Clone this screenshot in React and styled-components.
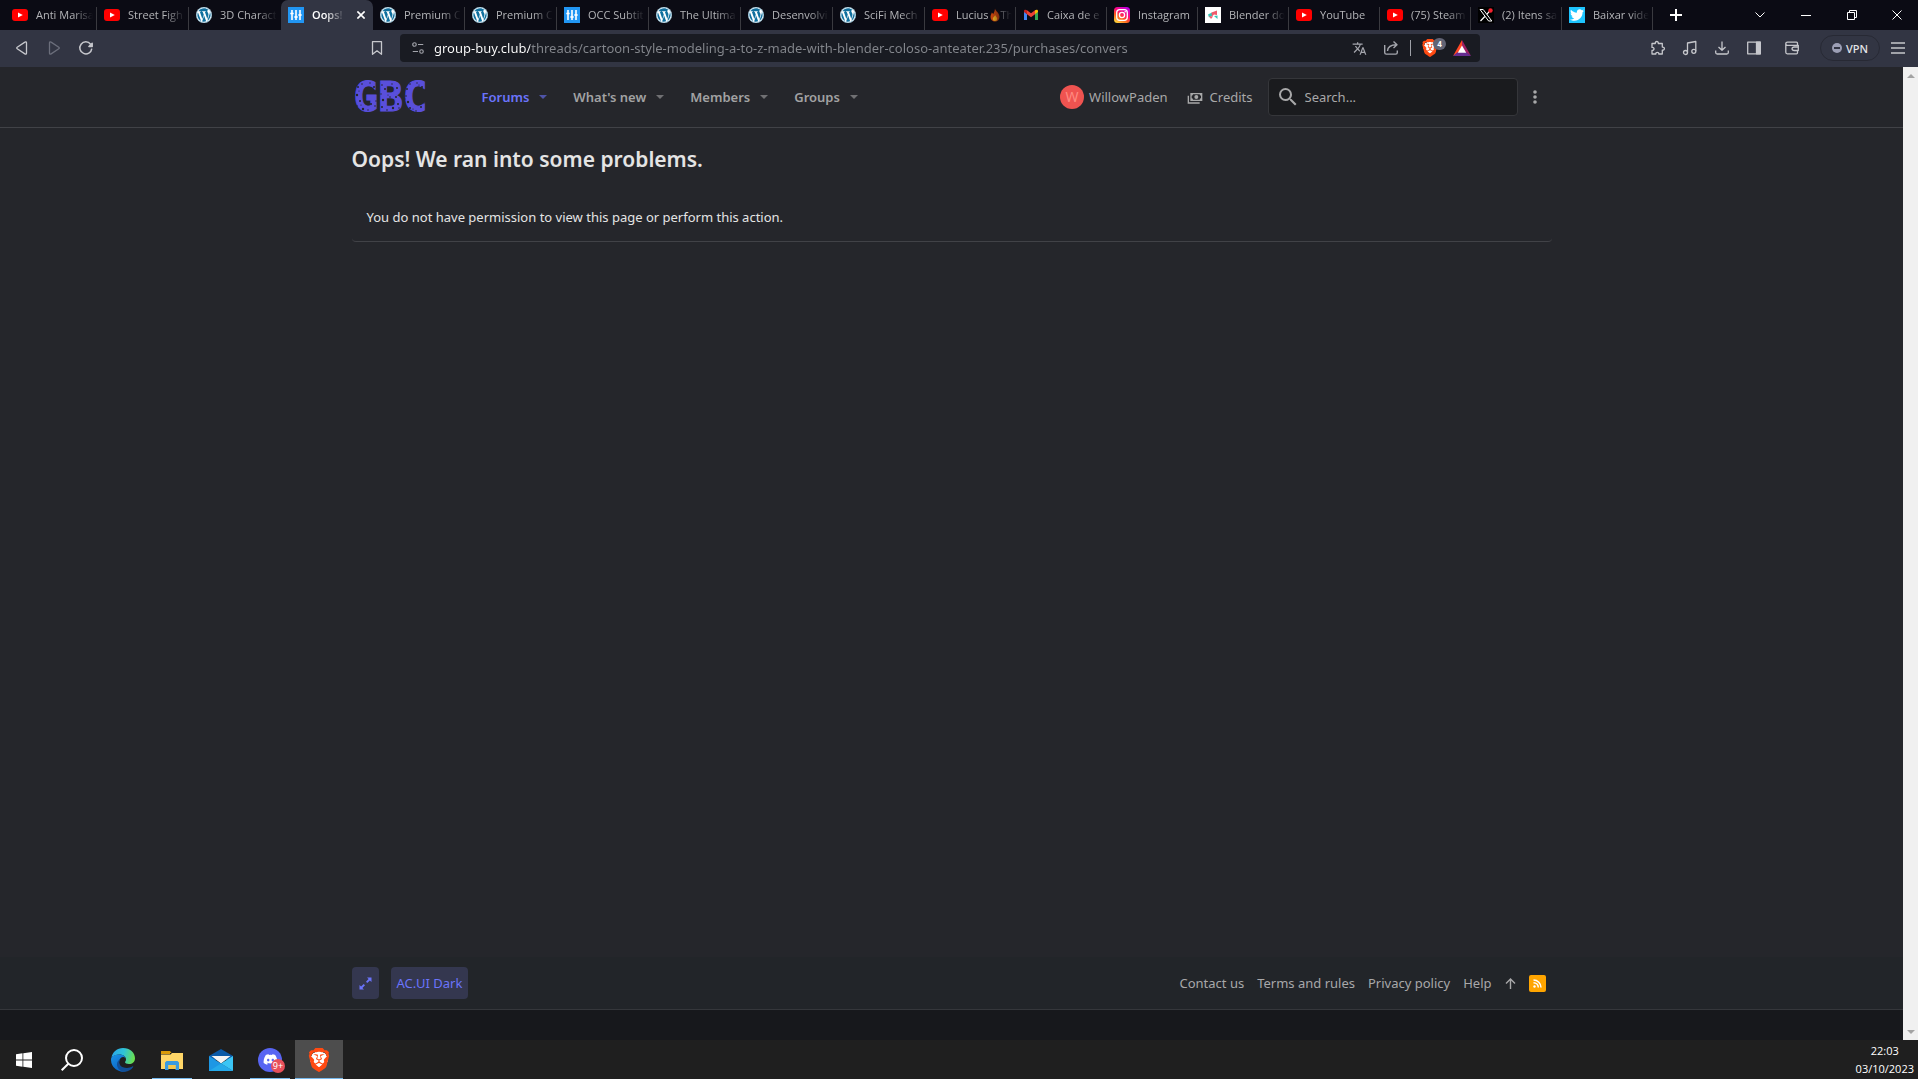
import React from 'react';
import styled, { createGlobalStyle, css } from 'styled-components';
import { FaWordpress, FaDiscord, FaTwitter } from 'react-icons/fa';
import { MdTranslate } from 'react-icons/md';
import { SiBrave } from 'react-icons/si';

const GlobalStyle = createGlobalStyle`
  * {
    box-sizing: border-box;
  }

  body {
    margin: 0;
    background: #25262b;
    font-family: 'Noto Sans', 'Open Sans', sans-serif;
    font-size: 13px;
    color: #a8a8a9;
  }

  button,
  input {
    font: inherit;
    color: inherit;
    background: none;
    border: none;
    padding: 0;
    outline: none;
  }

  a {
    color: inherit;
    text-decoration: none;
  }

  svg {
    display: block;
    flex-shrink: 0;
  }
`;

const Screen = styled.div`
  display: flex;
  flex-direction: column;
  min-height: 100vh;
`;

/* ---------- browser chrome ---------- */

const TabStrip = styled.div`
  display: flex;
  height: 30px;
  padding-left: 5px;
  background: #0b0b14;
`;

const Tab = styled.div`
  display: flex;
  align-items: center;
  flex: 0 1 ${props => (props.$narrow ? 91 : 92)}px;
  min-width: 0;
  height: 30px;
  color: #b4b5b8;
  background: linear-gradient(#3a3a40, #3a3a40) right bottom / 1px 23px no-repeat;

  ${props =>
    props.$plain &&
    css`
      background: none;
    `}

  ${props =>
    props.$active &&
    css`
      color: #fff;
      font-weight: 600;
      background: #323543;
      border-radius: 7px 7px 0 0;
    `}
`;

const TabButton = styled.button`
  display: flex;
  align-items: center;
  gap: 8px;
  flex: 1;
  min-width: 0;
  padding-left: 7px;
`;

const TabTitle = styled.span`
  display: flex;
  align-items: center;
  flex: 1;
  min-width: 0;
  margin-right: 4px;
  overflow: hidden;
  white-space: nowrap;
  font-family: 'Open Sans', 'Noto Sans', sans-serif;
  font-size: 11px;
  line-height: 16px;
  mask-image: linear-gradient(to left, transparent, #000 ${props => (props.$full ? 0 : 20)}px);
`;

const TabClose = styled.button`
  display: flex;
  justify-content: center;
  width: 24px;
`;

const StripButton = styled.button`
  display: flex;
  align-items: center;
  justify-content: center;
  width: ${props => props.$width || 46}px;
  height: 30px;
  color: #fff;
`;

const WindowControls = styled.div`
  display: flex;
  margin-left: auto;
`;

const Toolbar = styled.div`
  display: flex;
  align-items: center;
  height: 37px;
  padding-bottom: 1px;
  color: #c6c7cc;
  background: #323543;
`;

const ToolbarStart = styled.div`
  display: flex;
  align-items: center;
  flex: 1;
  padding: 0 7px 0 6px;
`;

const ToolbarEnd = styled.div`
  display: flex;
  align-items: center;
  justify-content: flex-end;
  flex: 1;
  padding: 0 4px 0 9px;
`;

const IconButton = styled.button`
  display: flex;
  align-items: center;
  justify-content: center;
  position: relative;
  width: 32px;
  height: 28px;
  color: ${props => (props.$dim ? '#6b6e7b' : 'inherit')};
  margin-left: ${props => (props.$push ? 'auto' : '0')};
`;

const AddressBar = styled.div`
  display: flex;
  align-items: center;
  flex: 0 1 1080px;
  height: 28px;
  margin-right: 38px;
  padding: 0 2px;
  color: #a4a6ad;
  background: #191b22;
  border-radius: 4px;
`;

const AddressInput = styled.input`
  flex: 1;
  min-width: 0;
  line-height: 20px;
  color: transparent;
  background: linear-gradient(to right, #fff 96px, #83868c 96px);
  background-clip: text;
`;

const BarDivider = styled.span`
  width: 1px;
  height: 16px;
  margin: 0 3px;
  background: #9fa1a8;
`;

const ShieldBadge = styled.span`
  position: absolute;
  top: 4px;
  right: 0;
  width: 13px;
  height: 12px;
  border-radius: 6px;
  font-size: 8px;
  font-weight: 700;
  line-height: 12px;
  text-align: center;
  color: #fff;
  background: #626475;
`;

const WalletButton = styled(IconButton)`
  margin: 0 12px 0 6px;
`;

const VpnButton = styled.button`
  display: flex;
  align-items: center;
  justify-content: center;
  gap: 4px;
  width: 60px;
  height: 26px;
  margin-right: 2px;
  border: 1px solid #272934;
  border-radius: 13px;
  font-size: 11px;
  font-weight: 500;
  color: #e4e4e8;
`;

/* ---------- forum page ---------- */

const Viewport = styled.div`
  display: flex;
  flex: 1;
`;

const Page = styled.div`
  display: flex;
  flex-direction: column;
  flex: 1;
  min-width: 0;
  background: #25262b;
`;

const Scrollbar = styled.div`
  display: flex;
  flex-direction: column;
  justify-content: space-between;
  width: 15px;
  background: #f0f0f0;
`;

const ScrollButton = styled.button`
  display: flex;
  align-items: center;
  justify-content: center;
  height: 17px;
  color: #a3a3a3;
`;

const Container = styled.div`
  width: 100%;
  max-width: 1200px;
  margin: 0 auto;
`;

const Header = styled.header`
  border-bottom: 1px solid #414247;
`;

const HeaderRow = styled(Container)`
  display: flex;
  align-items: center;
  height: 60px;
`;

const Logo = styled.a`
  position: relative;
  width: 76px;
  padding-left: 2px;
  font-family: 'DejaVu Sans Mono', monospace;
  font-size: 41px;
  font-weight: 700;
  line-height: 44px;
  color: #594fdb;
  -webkit-text-stroke: 1px #594fdb;
`;

const LogoWear = styled.svg`
  position: absolute;
  inset: 0;
  width: 100%;
  height: 100%;
`;

const Nav = styled.nav`
  display: flex;
  align-items: center;
  gap: 26px;
  margin-left: 54px;
`;

const NavItem = styled.a`
  display: flex;
  align-items: center;
  gap: 10px;
  font-weight: 600;
  color: ${props => (props.$active ? '#6b74fb' : '#a2a2a3')};

  svg {
    opacity: 0.6;
  }
`;

const UserArea = styled.div`
  display: flex;
  align-items: center;
  margin-left: auto;
`;

const UserLink = styled.a`
  display: flex;
  align-items: center;
  gap: ${props => props.$gap}px;
  margin-right: ${props => props.$after}px;
`;

const Avatar = styled.span`
  width: 24px;
  height: 24px;
  border-radius: 50%;
  font-size: 14px;
  line-height: 24px;
  text-align: center;
  color: #ff8a80;
  background: #ef5350;
`;

const SearchBox = styled.label`
  display: flex;
  align-items: center;
  gap: 5px;
  width: 250px;
  height: 38px;
  padding-left: 7px;
  border: 1px solid #35363a;
  border-radius: 4px;
  background: #1a1b1e;
`;

const SearchInput = styled.input`
  flex: 1;
  min-width: 0;

  &::placeholder {
    color: #a8a8a9;
    opacity: 1;
  }
`;

const MoreButton = styled.button`
  display: flex;
  justify-content: center;
  width: 34px;
`;

const Main = styled.main`
  flex: 1;
`;

const Title = styled.h1`
  margin: 0;
  padding: 16px 0 25px;
  font-size: 21px;
  font-weight: 600;
  line-height: 30px;
  color: #e4e4e4;
`;

const Message = styled.div`
  padding: 7px 15px 13px;
  border-bottom: 1px solid #414247;
  border-radius: 4px;
  line-height: 22px;
  color: #e4e4e4;
`;

const Footer = styled.footer`
  background: #222529;
  border-bottom: 1px solid #35373b;
`;

const FooterRow = styled(Container)`
  display: flex;
  align-items: center;
  gap: 12px;
  padding: 10px 6px 10px 0;
`;

const StyleButton = styled.button`
  display: flex;
  align-items: center;
  height: 32px;
  padding: 0 ${props => (props.$icon ? 7 : 6)}px;
  border-radius: 4px;
  color: #6b74fb;
  background: #34374f;
`;

const FooterLinks = styled.div`
  display: flex;
  align-items: center;
  gap: 13px;
  margin-left: auto;
`;

const RssLink = styled.a`
  display: flex;
  align-items: center;
  justify-content: center;
  width: 17px;
  height: 17px;
  border-radius: 2px;
  background: #ffa500;
`;

const BottomBar = styled.div`
  height: 30px;
  background: #17181c;
`;

/* ---------- task bar ---------- */

const TaskBar = styled.div`
  display: flex;
  gap: 1px;
  height: 39px;
  padding-left: 1px;
  background: #1f1f1f;
`;

const TaskButton = styled.button`
  position: relative;
  display: flex;
  align-items: center;
  justify-content: center;
  width: 48px;
  background: ${props => (props.$active ? '#4d4d4d' : 'none')};

  &::after {
    content: '';
    display: ${props => (props.$open || props.$active ? 'block' : 'none')};
    position: absolute;
    bottom: 0;
    left: ${props => (props.$active ? 0 : 4)}px;
    right: ${props => (props.$active ? 0 : 4)}px;
    height: 1px;
    background: #76b9ed;
  }
`;

const TaskBadge = styled.span`
  position: absolute;
  right: 9px;
  bottom: 6px;
  width: 14px;
  height: 14px;
  border-radius: 50%;
  font-size: 9px;
  line-height: 13px;
  text-align: center;
  color: #fff;
  background: #e8505b;
`;

const Clock = styled.div`
  margin-left: auto;
  padding: 2px 4px 0 0;
  font-family: 'Open Sans', 'Noto Sans', sans-serif;
  font-size: 11px;
  line-height: 18px;
  text-align: center;
  color: #fff;
`;

/* ---------- icons ---------- */

const YoutubeIcon = () => (
  <svg width="16" height="16" viewBox="0 0 16 16">
    <rect y="2" width="16" height="12" rx="3" fill="#f00" />
    <path d="M6 5.500v5L10.800 8z" fill="#fff" />
  </svg>
);

const WordpressBadge = styled.span`
  flex-shrink: 0;
  border-radius: 50%;
  color: #0f6f9e;
  background: #fff;
`;

const WordpressIcon = () => (
  <WordpressBadge>
    <FaWordpress size={16} />
  </WordpressBadge>
);

const SlidersIcon = () => (
  <svg width="16" height="16" viewBox="0 0 16 16">
    <rect width="16" height="16" fill="#2196f3" />
    <path
      d="M4 3v10M8 3v10M12 3v10M2.300 6.500h3.400M6.300 10h3.400M10.300 8h3.400"
      stroke="#fff"
      strokeWidth="1.6"
    />
  </svg>
);

const GmailIcon = () => (
  <svg width="16" height="16" viewBox="0 0 16 16">
    <path d="M1 4.500v8.500h3V7z" fill="#4285f4" />
    <path d="M12 7v6h3V4.500z" fill="#34a853" />
    <path d="M1 4.200C1 2.500 2.800 2.400 4 3.300V7.300L1 5z" fill="#c5221f" />
    <path d="M4 3.300l4 3 4-3v4L8 10.300l-4-3z" fill="#ea4335" />
    <path d="M12 3.300c1.200-.9 3-.8 3 .9V5l-3 2.300z" fill="#fbbc04" />
  </svg>
);

const InstagramIcon = () => (
  <svg width="16" height="16" viewBox="0 0 16 16">
    <defs>
      <linearGradient id="insta" x1="0.2" y1="1" x2="0.8" y2="0">
        <stop offset="0" stopColor="#ffd43a" />
        <stop offset="0.35" stopColor="#ff5a1f" />
        <stop offset="0.6" stopColor="#ff0a78" />
        <stop offset="1" stopColor="#b900e6" />
      </linearGradient>
    </defs>
    <rect width="16" height="16" rx="3.500" fill="url(#insta)" />
    <g fill="none" stroke="#fff" strokeWidth="1.3">
      <rect x="2.700" y="2.700" width="10.600" height="10.600" rx="3" />
      <circle cx="8" cy="8" r="2.600" />
    </g>
    <circle cx="11.200" cy="4.800" r="0.8" fill="#fff" />
  </svg>
);

const DownloaderIcon = () => (
  <svg width="16" height="16" viewBox="0 0 16 16">
    <rect width="16" height="16" fill="#fff" />
    <path d="M3 7.500l4-2v3.500L4 10.500zM9 9l3.500 3V8.500z" fill="#35c4b5" />
    <path d="M6.500 5.500L12 3.500V8L9 7.500 7 9.500zM4 9l4 .5-2 2.500z" fill="#f0596b" />
  </svg>
);

const XIcon = () => (
  <svg width="16" height="16" viewBox="0 0 16 16">
    <rect width="16" height="16" fill="#000" />
    <path d="M2 2.500h3.200L13.800 14h-3.200z" fill="none" stroke="#fff" strokeWidth="1" />
    <path d="M13 2.500L8.800 7.400M6.800 9.500L2.500 14" stroke="#fff" strokeWidth="1.2" />
    <circle cx="12.500" cy="3.500" r="2.200" fill="#f4212e" />
  </svg>
);

const BirdBadge = styled.span`
  display: flex;
  align-items: center;
  justify-content: center;
  flex-shrink: 0;
  width: 16px;
  height: 16px;
  color: #fff;
  background: #1dc4ff;
`;

const BirdIcon = () => (
  <BirdBadge>
    <FaTwitter size={14} />
  </BirdBadge>
);

const FlameIcon = () => (
  <svg width="12" height="14" viewBox="0 0 12 14">
    <path
      d="M6 0.500c.3 2.500 4.500 4.300 4.500 8.300A4.400 4.400 0 0 1 6 13.500 4.400 4.400 0 0 1 1.500 9c0-2 1-3 1.300-4.500.8.500 1.100 1 1.300 1.700C5.300 4.500 5.800 2.500 6 .5z"
      fill="#c1440e"
    />
    <path
      d="M6.200 7c.3 1.400 2 2 2 3.800A2.200 2.200 0 0 1 6 13a2.200 2.200 0 0 1-2.200-2.300C3.800 9.200 5.600 8.600 6.200 7z"
      fill="#e9a820"
    />
  </svg>
);

const CloseIcon = ({ size = 10, weight = 1 }) => (
  <svg width={size} height={size} viewBox="0 0 10 10" stroke="currentColor" strokeWidth={weight}>
    <path d="M0.500 0.500l9 9M9.500 0.500l-9 9" />
  </svg>
);

const Stroke = ({ size = 16, weight = 1.3, children }) => (
  <svg
    width={size}
    height={size}
    viewBox="0 0 16 16"
    fill="none"
    stroke="currentColor"
    strokeWidth={weight}
    strokeLinejoin="round"
  >
    {children}
  </svg>
);

const Caret = ({ up }) => (
  <svg width="8" height="4" viewBox="0 0 8 4">
    <path d={up ? 'M0 4l4-4 4 4z' : 'M0 0l4 4 4-4z'} fill="currentColor" />
  </svg>
);

const BraveShape = styled.span`
  display: flex;
  color: #ff4a12;
  border-radius: 50%;
  background: radial-gradient(ellipse at center, #fff 50%, transparent 52%);
`;

const BatIcon = () => (
  <svg width="18" height="16" viewBox="0 0 18 16">
    <path d="M9 0L0 16l9-6z" fill="#ff4724" />
    <path d="M9 0l9 16-9-6z" fill="#9e1f63" />
    <path d="M0 16h18l-5-4H5z" fill="#662d91" />
    <path d="M9 5.500L4.800 12.800h8.400z" fill="#fff" />
  </svg>
);

const EdgeIcon = () => (
  <svg width="24" height="24" viewBox="0 0 24 24">
    <defs>
      <linearGradient id="edgeTop" x1="0" y1="0.3" x2="1" y2="0.5">
        <stop offset="0" stopColor="#2aa6ea" />
        <stop offset="0.5" stopColor="#2fc3d6" />
        <stop offset="1" stopColor="#6be04c" />
      </linearGradient>
      <linearGradient id="edgeLow" x1="0" y1="0" x2="0.6" y2="1">
        <stop offset="0" stopColor="#1b93e6" />
        <stop offset="1" stopColor="#0a63c4" />
      </linearGradient>
    </defs>
    <path
      d="M0.500 9.500C1.500 4 6.200 0 12 0c7 0 12 4.800 12 10.200 0 3.600-2.700 5.800-6 5.800-2.500 0-4-.9-4-1.700 0-.6 1-1 1-2.800 0-2.700-2.800-5-6.500-5-3.600 0-6.500 1.400-8 3z"
      fill="url(#edgeTop)"
    />
    <path
      d="M0.300 9.800C2 7.500 5 6.400 8.500 6.500c3.500 0 5.500 1.800 6 3.500-1-.8-1.800-1-2.600-.9-2.200.2-3.900 2.400-3.900 5.400 0 4.500 3.300 8 7 8.800A12 12 0 0 1 0 12c0-.8.100-1.500.3-2.200z"
      fill="url(#edgeLow)"
    />
    <path
      d="M9.300 11.200C7.200 14 8.500 18 12 19.300c3.500 1.300 7.200.7 9.600-1 .5-.3.900.1.600.6A12 12 0 0 1 14 23.800c-5-.3-8.500-4-8-8.300.3-2 1.400-3.600 3.300-4.300z"
      fill="#124f96"
    />
  </svg>
);

const FolderIcon = () => (
  <svg width="22" height="20" viewBox="0 0 22 20">
    <path d="M0 1h9l1.500 2H0z" fill="#d99a08" />
    <path d="M0 1h9v3H0z" fill="#d99a08" />
    <path d="M0 4.500h9.500l1.500-1.500h11V19H0z" fill="#ffd667" />
    <path d="M4 20v-7.500l1.500-1.500h11L18 12.500V20h-3.500v-5h-7v5z" fill="#3a9be0" />
    <path d="M7.500 15h7v4h-7z" fill="#f7c64a" />
  </svg>
);

const MailIcon = () => (
  <svg width="24" height="22" viewBox="0 0 24 22">
    <path d="M0 7L12 0l12 7v4H0z" fill="#0a5aa8" />
    <path d="M2.500 7h19l-9.500 7.500z" fill="#f4f4f4" />
    <path d="M0 7l24 15H0z" fill="#1d97e4" />
    <path d="M24 7v15L12 14.500z" fill="#3bc5f5" />
    <path d="M0 22l12-7.500L24 22z" fill="#25aaea" />
  </svg>
);

const DiscordBadge = styled.span`
  display: flex;
  align-items: center;
  justify-content: center;
  width: 24px;
  height: 24px;
  border-radius: 50%;
  color: #fff;
  background: #5865f2;
`;

const tabs = [
  { title: 'Anti Marisa', icon: YoutubeIcon },
  { title: 'Street Figh', icon: YoutubeIcon },
  { title: '3D Charact', icon: WordpressIcon, plain: true },
  { title: 'Oops!', icon: SlidersIcon, active: true },
  { title: 'Premium C', icon: WordpressIcon },
  { title: 'Premium C', icon: WordpressIcon },
  { title: 'OCC Subtit', icon: SlidersIcon },
  { title: 'The Ultima', icon: WordpressIcon },
  { title: 'Desenvolvi', icon: WordpressIcon },
  { title: 'SciFi Mech', icon: WordpressIcon },
  { title: 'Lucius', after: 'Th', icon: YoutubeIcon, narrow: true },
  { title: 'Caixa de e', icon: GmailIcon, narrow: true },
  { title: 'Instagram', icon: InstagramIcon, narrow: true, full: true },
  { title: 'Blender do', icon: DownloaderIcon, narrow: true },
  { title: 'YouTube', icon: YoutubeIcon, narrow: true, full: true },
  { title: '(75) Steam', icon: YoutubeIcon, narrow: true },
  { title: '(2) Itens sa', icon: XIcon, narrow: true },
  { title: 'Baixar vide', icon: BirdIcon, narrow: true },
];

const navItems = ['Forums', "What's new", 'Members', 'Groups'];
const footerLinks = ['Contact us', 'Terms and rules', 'Privacy policy', 'Help'];

// [x, y, radius] of the worn spots on the logo
const wornSpots = [
  [6, 12, 1], [10, 9, 0.8], [5, 20, 1.2], [8, 26, 1], [5, 31, 0.8], [11, 34, 1.2], [16, 35, 0.7],
  [19, 29, 1], [23, 31, 0.8], [22, 12, 1], [18, 8, 0.7], [7, 16, 0.6], [9, 30, 0.6], [24, 26, 0.7],
  [30, 10, 0.8], [33, 14, 1], [29, 19, 0.7], [31, 25, 1.2], [30, 32, 1], [35, 35, 0.8], [41, 33, 1.2],
  [46, 29, 1], [44, 22, 1], [38, 22, 0.8], [45, 13, 1], [40, 9, 0.7], [47, 33, 0.7], [36, 20, 0.6],
  [55, 14, 1], [58, 9, 0.8], [54, 21, 0.8], [56, 27, 1.2], [58, 33, 1], [64, 36, 0.8], [69, 32, 1],
  [72, 28, 0.7], [70, 12, 1], [65, 8, 0.7], [73, 15, 0.8], [53, 24, 0.6], [61, 34, 0.6], [67, 10, 0.6],
];

const BrowserTabs = () => (
  <TabStrip>
    {tabs.map(({ title, after, icon: Icon, active, narrow, plain, full }, i) => (
      <Tab key={i} $active={active} $narrow={narrow} $plain={plain}>
        <TabButton type="button">
          <Icon />
          <TabTitle $full={full}>
            {title}
            {after && <FlameIcon />}
            {after}
          </TabTitle>
        </TabButton>
        {active && (
          <TabClose type="button" aria-label="Close tab">
            <CloseIcon size={8} weight={2} />
          </TabClose>
        )}
      </Tab>
    ))}
    <StripButton type="button" aria-label="New tab">
      <svg width="12" height="12" viewBox="0 0 12 12" stroke="currentColor" strokeWidth="2">
        <path d="M6 0v12M0 6h12" />
      </svg>
    </StripButton>
    <WindowControls>
      <StripButton type="button" aria-label="Search tabs">
        <svg width="10" height="6" viewBox="0 0 10 6" fill="none" stroke="currentColor">
          <path d="M0.500 0.500L5 5l4.500-4.500" />
        </svg>
      </StripButton>
      <StripButton type="button" aria-label="Minimize">
        <svg width="10" height="1" viewBox="0 0 10 1">
          <rect width="10" height="1" fill="currentColor" />
        </svg>
      </StripButton>
      <StripButton type="button" aria-label="Restore">
        <svg width="10" height="10" viewBox="0 0 10 10" fill="none" stroke="currentColor">
          <path d="M0.500 2.500h7v7h-7zM2.500 2.500v-2h7v7h-2" />
        </svg>
      </StripButton>
      <StripButton type="button" aria-label="Close" $width={43}>
        <CloseIcon />
      </StripButton>
    </WindowControls>
  </TabStrip>
);

const BrowserToolbar = () => (
  <Toolbar>
    <ToolbarStart>
      <IconButton type="button" aria-label="Back">
        <Stroke>
          <path d="M12.500 2.800v10.400c0 1-.9 1.200-1.600.7L3.200 8.700c-.6-.4-.6-1 0-1.400l7.700-5.200c.7-.5 1.600-.3 1.600.7z" />
        </Stroke>
      </IconButton>
      <IconButton type="button" aria-label="Forward" $dim>
        <Stroke>
          <path d="M3.500 2.800v10.400c0 1 .9 1.200 1.600.7l7.700-5.200c.6-.4.6-1 0-1.400L5.100 2.100c-.7-.5-1.600-.3-1.600.7z" />
        </Stroke>
      </IconButton>
      <IconButton type="button" aria-label="Reload">
        <Stroke weight={1.5}>
          <path d="M13.800 8.600A6 6 0 1 1 12.600 4.200" />
          <path d="M14.200 3.200v3.300h-3.300z" fill="currentColor" />
        </Stroke>
      </IconButton>
      <IconButton type="button" aria-label="Bookmark" $push>
        <Stroke>
          <path d="M3.500 1.700h9v12.600L8 10.800l-4.500 3.500z" />
        </Stroke>
      </IconButton>
    </ToolbarStart>
    <AddressBar>
      <IconButton type="button" aria-label="Site information">
        <Stroke size={14}>
          <circle cx="4" cy="4" r="2" />
          <circle cx="12" cy="12" r="2" />
          <path d="M8 4h6M2 12h6" />
        </Stroke>
      </IconButton>
      <AddressInput
        type="text"
        aria-label="Address"
        defaultValue="group-buy.club/threads/cartoon-style-modeling-a-to-z-made-with-blender-coloso-anteater.235/purchases/convers"
      />
      <IconButton type="button" aria-label="Translate">
        <MdTranslate size={15} />
      </IconButton>
      <IconButton type="button" aria-label="Share">
        <Stroke weight={1.4}>
          <path d="M1.700 5v7.500c0 1 .6 1.600 1.600 1.600h9.400c1 0 1.600-.6 1.600-1.600V10.500" />
          <path d="M4.500 11c.3-4 3-6.200 9-6.200M10.500 1.500L14 4.800 10.500 8" />
        </Stroke>
      </IconButton>
      <BarDivider />
      <IconButton type="button" aria-label="Shields">
        <BraveShape>
          <SiBrave size={18} />
        </BraveShape>
        <ShieldBadge>4</ShieldBadge>
      </IconButton>
      <IconButton type="button" aria-label="Rewards">
        <BatIcon />
      </IconButton>
    </AddressBar>
    <ToolbarEnd>
      <IconButton type="button" aria-label="Extensions">
        <Stroke>
          <path d="M2 3.500h3.300c-.5-2.700 3.500-2.700 3 0h4v3.600c2.800-.4 2.800 3.400 0 3v3.900H8.800c.3-2.300-3.300-2.300-3 0H2v-3.600c2.700.2 2.700-3.300 0-3z" />
        </Stroke>
      </IconButton>
      <IconButton type="button" aria-label="Media">
        <Stroke>
          <circle cx="3.500" cy="12.500" r="2" />
          <circle cx="11.800" cy="11.300" r="2" />
          <path d="M5.500 12.500V3l8.300-1.500v9.800" />
        </Stroke>
      </IconButton>
      <IconButton type="button" aria-label="Downloads">
        <Stroke>
          <path d="M8 1.500v8.500M4.500 7L8 10.300 11.500 7M1.700 10.500v2c0 1 .6 1.500 1.500 1.500h9.600c.9 0 1.500-.5 1.500-1.500v-2" />
        </Stroke>
      </IconButton>
      <IconButton type="button" aria-label="Sidebar">
        <Stroke>
          <rect x="1.700" y="2.200" width="12.600" height="11.600" />
          <path d="M10.500 2.200h3.800v11.600h-3.800z" fill="currentColor" />
        </Stroke>
      </IconButton>
      <WalletButton type="button" aria-label="Wallet">
        <Stroke>
          <path d="M13.500 5.300V3.200c0-.6-.3-1-1-1h-9c-1 0-1.700.6-1.700 1.500v8.600c0 .9.600 1.500 1.500 1.500h9.200c.7 0 1-.3 1-1v-2M2 4.200c0 .7.600 1.100 1.500 1.100h10.800v5.200h-4c-3 0-3-3.500 0-3.500h4" />
        </Stroke>
      </WalletButton>
      <VpnButton type="button">
        <svg width="10" height="10" viewBox="0 0 10 10">
          <circle cx="5" cy="5" r="5" fill="#9c9fb5" />
          <rect x="2" y="4" width="6" height="2" fill="#323543" />
        </svg>
        VPN
      </VpnButton>
      <IconButton type="button" aria-label="Menu">
        <Stroke>
          <path d="M1 3h14M1 8h14M1 13h14" />
        </Stroke>
      </IconButton>
    </ToolbarEnd>
  </Toolbar>
);

const ForumHeader = () => (
  <Header>
    <HeaderRow>
      <Logo href="#home">
        GBC
        <LogoWear viewBox="0 0 76 44" fill="#25262b">
          {wornSpots.map(([cx, cy, r]) => (
            <circle key={`${cx}-${cy}`} cx={cx} cy={cy} r={r} />
          ))}
        </LogoWear>
      </Logo>
      <Nav>
        {navItems.map((item, i) => (
          <NavItem key={item} href={`#nav-${i}`} $active={i === 0}>
            {item}
            <Caret />
          </NavItem>
        ))}
      </Nav>
      <UserArea>
        <UserLink href="#account" $gap={5} $after={19}>
          <Avatar>W</Avatar>
          WillowPaden
        </UserLink>
        <UserLink href="#credits" $gap={7} $after={15}>
          <svg width="16" height="16" viewBox="0 0 24 24" fill="currentColor">
            <path d="M5 6h18v12H5V6m9 3a3 3 0 0 1 3 3 3 3 0 0 1-3 3 3 3 0 0 1-3-3 3 3 0 0 1 3-3M9 8a2 2 0 0 1-2 2v4a2 2 0 0 1 2 2h10a2 2 0 0 1 2-2v-4a2 2 0 0 1-2-2H9m-8 2h2v10h16v2H1V10z" />
          </svg>
          Credits
        </UserLink>
        <SearchBox>
          <svg width="24" height="24" viewBox="0 0 24 24" fill="currentColor">
            <path d="M9.500 3A6.500 6.500 0 0 1 16 9.500c0 1.610-.59 3.090-1.560 4.230l.27.27h.79l5 5-1.500 1.500-5-5v-.79l-.27-.27A6.516 6.516 0 0 1 9.500 16 6.500 6.500 0 0 1 3 9.500 6.500 6.500 0 0 1 9.500 3m0 2C7 5 5 7 5 9.500S7 14 9.500 14 14 12 14 9.500 12 5 9.500 5z" />
          </svg>
          <SearchInput type="search" placeholder="Search..." aria-label="Search" />
        </SearchBox>
        <MoreButton type="button" aria-label="More">
          <svg width="4" height="14" viewBox="0 0 4 14" fill="currentColor">
            <circle cx="2" cy="2" r="1.800" />
            <circle cx="2" cy="7" r="1.800" />
            <circle cx="2" cy="12" r="1.800" />
          </svg>
        </MoreButton>
      </UserArea>
    </HeaderRow>
  </Header>
);

const ForumFooter = () => (
  <>
    <Footer>
      <FooterRow>
        <StyleButton type="button" aria-label="Toggle width" $icon>
          <svg width="13" height="13" viewBox="0 0 13 13" fill="currentColor">
            <path d="M8 0.500h4.500V5L10.900 3.400 8.300 6 7 4.700l2.600-2.600zM5 12.500H0.500V8l1.600 1.600L4.700 7 6 8.300l-2.600 2.600z" />
          </svg>
        </StyleButton>
        <StyleButton type="button">AC.UI Dark</StyleButton>
        <FooterLinks>
          {footerLinks.map((item, i) => (
            <a key={item} href={`#footer-${i}`}>{item}</a>
          ))}
          <a href="#top" aria-label="Top">
            <svg width="11" height="11" viewBox="0 0 11 11" fill="none" stroke="currentColor" strokeWidth="1.4">
              <path d="M5.500 11V1M1 5.500L5.500 1 10 5.500" />
            </svg>
          </a>
          <RssLink href="#rss" aria-label="RSS">
            <svg width="9" height="9" viewBox="0 0 9 9" fill="none" stroke="#fff" strokeWidth="1.500">
              <circle cx="1.500" cy="7.500" r="1.200" fill="#fff" stroke="none" />
              <path d="M0.500 3.700a4.800 4.800 0 0 1 4.800 4.800M0.500 1a7.500 7.500 0 0 1 7.500 7.500" />
            </svg>
          </RssLink>
        </FooterLinks>
      </FooterRow>
    </Footer>
    <BottomBar />
  </>
);

const SystemTaskBar = () => (
  <TaskBar>
    <TaskButton type="button" aria-label="Start">
      <svg width="18" height="16" viewBox="0 0 18 16" fill="#fff">
        <path d="M0 2.200l6.500-.9v6.200H0zM7.300 1.200L16 0v7.500H7.300zM0 8.400h6.500v6.300L0 13.800zM7.300 8.400H16V16l-8.700-1.200z" />
      </svg>
    </TaskButton>
    <TaskButton type="button" aria-label="Search">
      <svg width="26" height="24" viewBox="0 0 26 24" fill="none" stroke="#fff" strokeWidth="2">
        <circle cx="13" cy="10" r="8" />
        <path d="M7.300 15.700L0.700 22.300" />
      </svg>
    </TaskButton>
    <TaskButton type="button" aria-label="Edge">
      <EdgeIcon />
    </TaskButton>
    <TaskButton type="button" aria-label="File Explorer" $open>
      <FolderIcon />
    </TaskButton>
    <TaskButton type="button" aria-label="Mail">
      <MailIcon />
    </TaskButton>
    <TaskButton type="button" aria-label="Discord" $open>
      <DiscordBadge>
        <FaDiscord size={15} />
      </DiscordBadge>
      <TaskBadge>9+</TaskBadge>
    </TaskButton>
    <TaskButton type="button" aria-label="Brave" $active>
      <BraveShape>
        <SiBrave size={24} />
      </BraveShape>
    </TaskButton>
    <Clock>
      <div>22:03</div>
      <div>03/10/2023</div>
    </Clock>
  </TaskBar>
);

const App = () => (
  <>
    <GlobalStyle />
    <Screen>
      <BrowserTabs />
      <BrowserToolbar />
      <Viewport>
        <Page>
          <ForumHeader />
          <Main>
            <Container>
              <Title>Oops! We ran into some problems.</Title>
              <Message>You do not have permission to view this page or perform this action.</Message>
            </Container>
          </Main>
          <ForumFooter />
        </Page>
        <Scrollbar>
          <ScrollButton type="button" aria-label="Scroll up"><Caret up /></ScrollButton>
          <ScrollButton type="button" aria-label="Scroll down"><Caret /></ScrollButton>
        </Scrollbar>
      </Viewport>
      <SystemTaskBar />
    </Screen>
  </>
);

export default App;
